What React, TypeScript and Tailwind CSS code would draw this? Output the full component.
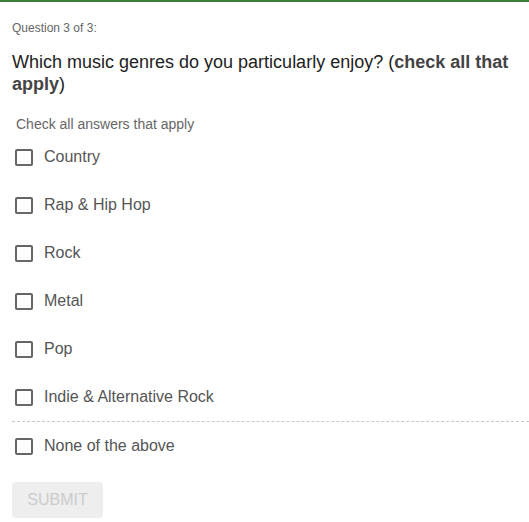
import { useState } from "react";

const options = [
  "Country",
  "Rap & Hip Hop",
  "Rock",
  "Metal",
  "Pop",
  "Indie & Alternative Rock",
];

const Option = ({ label, checked, onToggle }: { label: string; checked: boolean; onToggle: () => void }) => (
  <label className="flex h-[48px] cursor-pointer items-center">
    <span className="ml-[15px] flex h-[17px] w-[18px] items-center justify-center rounded-[2px] border-2 border-[#666] bg-white">
      {checked && <span className="h-[8px] w-[8px] bg-[#666]" />}
    </span>
    <input type="checkbox" className="hidden" checked={checked} onChange={onToggle} />
    <span className="ml-[11px] text-[16px] text-[#555]">{label}</span>
  </label>
);

export default function App() {
  const [checked, setChecked] = useState<string[]>([]);

  const toggle = (label: string) =>
    setChecked((prev) => (prev.includes(label) ? prev.filter((l) => l !== label) : [...prev, label]));

  return (
    <div className="min-h-[522px] w-[529px] bg-white font-['Liberation_Sans',Arial,sans-serif]">
      <div className="h-[2px] bg-[#3e7e3a]" />

      <div className="pl-[12px] pr-[4px]">
        {/* Question header */}
        <p className="pt-[18px] text-[12px] leading-[16px] text-[#666]">Question 3 of 3:</p>
        <h2 className="mt-[15px] text-[18px] leading-[22px] text-[#222]">
          Which music genres do you particularly enjoy? (
          <b className="text-[#444]">check all that apply</b>)
        </h2>

        <p className="mt-[21px] pl-[4px] text-[14px] leading-[17px] text-[#666]">Check all answers that apply</p>
      </div>

      {/* Answers */}
      <div>
        {options.map((o) => (
          <Option key={o} label={o} checked={checked.includes(o)} onToggle={() => toggle(o)} />
        ))}
        <div className="ml-[12px] border-t border-dashed border-[#c8c8c8]" />
        <Option
          label="None of the above"
          checked={checked.includes("none")}
          onToggle={() => toggle("none")}
        />
      </div>

      <div className="pl-[12px] pt-[12px]">
        <button
          disabled
          className="h-[36px] w-[91px] rounded-[3px] bg-[#eeeeee] text-[16px] text-[#cccccc]"
        >
          SUBMIT
        </button>
      </div>
    </div>
  );
}
